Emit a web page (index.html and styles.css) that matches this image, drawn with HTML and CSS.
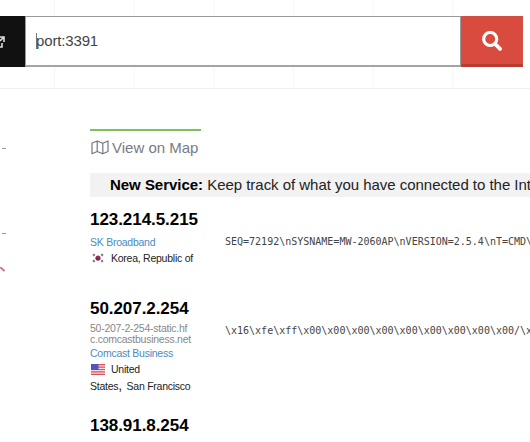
FILE: index.html
```
<!doctype html>
<html>
    <head>
        <title>port:3391 - Search</title>
        <meta charset="utf-8">
        <link rel="stylesheet" href="styles.css">
    </head>
    <body>
        <div id="header">
            <form id="search">
                <div class="explore">
                    <svg width="5" height="14" viewBox="0 0 5 14">
                        <path d="M0 2h4v5M4 2L0 6M0 12h2V8" fill="none" stroke="#ddd" stroke-width="1.6"/>
                    </svg>
                </div>
                <div class="query"><span class="caret"></span>port:3391</div>
                <div class="submit">
                    <svg width="20" height="20" viewBox="0 0 20 20">
                        <circle cx="8.2" cy="8" r="6.5" fill="none" stroke="#fff" stroke-width="3.2"/>
                        <path d="M13.2 13l4.8 4.9" stroke="#fff" stroke-width="3.8" stroke-linecap="round"/>
                    </svg>
                </div>
            </form>
        </div>
        <div id="content">
            <div id="sidebar">
                <div class="dash first"></div>
                <div class="dash second"></div>
                <svg class="map" width="6" height="6" viewBox="0 0 6 6">
                    <path d="M0 0l4.5 4" stroke="#c5788c" stroke-width="2"/>
                </svg>
            </div>
            <div id="results">
                <div class="view">
                    <svg width="18" height="15" viewBox="0 0 18 15">
                        <path d="M1 3l5.2-2 5.6 2.2L17 1v10.5l-5.2 2.3-5.6-2.3L1 13.8zM6.2 1v10.5M11.8 3.2v10.6" fill="none" stroke="#6f7880" stroke-width="1.2" stroke-linejoin="round"/>
                    </svg>
                    <span>View on Map</span>
                </div>
                <div class="notice"><b>New Service:</b> Keep track of what you have connected to the Int</div>
                <div class="result korea">
                    <div class="details">
                        <div class="ip">123.214.5.215</div>
                        <div class="org">SK Broadband</div>
                        <div class="country">
                            <svg class="flag" width="14" height="10" viewBox="0 0 14 10">
                                <circle cx="7" cy="5" r="2.6" fill="#b32450"/>
                                <path d="M4.6 5a2.4 2.4 0 0 0 4.8 0q-1.2 1-2.4 0t-2.4 0" fill="#493968"/>
                                <path d="M2 2.6l1.8-1.4M10.2 1.2l1.8 1.4M2 7.4l1.8 1.4M10.2 8.8l1.8-1.4" stroke="#777" stroke-width="2"/>
                            </svg>
                            <span>Korea, Republic of</span>
                        </div>
                    </div>
                    <pre>SEQ=72192\nSYSNAME=MW-2060AP\nVERSION=2.5.4\nT=CMD\</pre>
                </div>
                <div class="result us">
                    <div class="details">
                        <div class="ip">50.207.2.254</div>
                        <div class="host">50-207-2-254-static.hf<br>c.comcastbusiness.net</div>
                        <div class="org">Comcast Business</div>
                        <div class="country">
                            <svg class="flag" width="14" height="11" viewBox="0 0 14 11">
                                <rect width="14" height="11" fill="#f4dcdf"/>
                                <path d="M0 .7h14M0 3.1h14M0 5.5h14M0 7.9h14M0 10.3h14" stroke="#d9525f" stroke-width="1.2"/>
                                <rect width="7.5" height="6" fill="#5057b8"/>
                            </svg>
                            <span>United</span>
                        </div>
                        <div class="city">States<span class="comma">,</span> San Francisco</div>
                    </div>
                    <pre>\x16\xfe\xff\x00\x00\x00\x00\x00\x00\x00\x00\x00/\x</pre>
                </div>
                <div class="result">
                    <div class="details">
                        <div class="ip">138.91.8.254</div>
                    </div>
                </div>
            </div>
        </div>
    </body>
</html>
```
FILE: styles.css
```
body {
    margin: 0;
    height: 442px;
    overflow: hidden;
    background-color: #FFFFFF;
    font-family: "Liberation Sans", Arial, sans-serif;
    color: #222222;
}
#header {
    box-sizing: border-box;
    height: 89px;
    padding-top: 16px;
    border-bottom: 1px solid #F0F0F0;
    background-image: linear-gradient(to right, #F7F7F7 1px, transparent 1px);
    background-size: 79.7px 100%;
    background-position: 54px 0px;
}
#search {
    display: flex;
    width: 523px;
    height: 51px;
    margin: 0;
}
.explore {
    display: flex;
    align-items: center;
    width: 25px;
    background-color: #111111;
}
.query {
    display: flex;
    flex: 1;
    align-items: center;
    box-sizing: border-box;
    padding: 0px 0px 1px 10px;
    border: 1px solid #999999;
    border-bottom: 2px solid #A5A3A3;
    background-color: #FFFFFF;
    font-size: 15px;
    line-height: 18px;
    letter-spacing: -0.15px;
    color: #444444;
}
.caret {
    width: 1px;
    height: 16px;
    margin-right: -1px;
    background-color: #777777;
}
.submit {
    display: flex;
    align-items: center;
    justify-content: center;
    box-sizing: border-box;
    width: 62px;
    border: 1px solid #CF5145;
    border-bottom: 3px solid #B63C31;
    background-color: #D84B3E;
}
#content {
    display: flex;
}
#sidebar {
    width: 90px;
}
.dash {
    width: 4px;
    height: 1px;
    margin-left: 2px;
    background-color: #999999;
}
.first {
    margin-top: 59px;
}
.second {
    margin-top: 84px;
}
.map {
    display: block;
    margin-top: 33px;
}
#results {
    flex: 1;
    width: 440px;
    padding-top: 40px;
}
.view {
    display: flex;
    align-items: center;
    box-sizing: border-box;
    width: 111px;
    height: 35px;
    padding-left: 1px;
    border-top: 2px solid #7FC15E;
    font-size: 15px;
    white-space: nowrap;
    color: #767D83;
}
.view svg {
    margin-right: 3px;
}
.notice {
    height: 24px;
    margin-top: 9px;
    padding-left: 20px;
    background-color: #F2F2F2;
    font-size: 15px;
    line-height: 24px;
    letter-spacing: -0.03px;
    white-space: nowrap;
}
.notice b {
    color: #000000;
}
.result {
    display: flex;
}
.korea {
    height: 89px;
    margin-top: 13px;
}
.us {
    height: 117px;
}
.details {
    flex-shrink: 0;
    width: 135px;
    font-size: 10.5px;
    letter-spacing: -0.25px;
    white-space: nowrap;
}
.ip {
    height: 19px;
    font-size: 17px;
    font-weight: bold;
    line-height: 19px;
    letter-spacing: -0.06px;
    color: #000000;
}
.host {
    margin-top: 5px;
    line-height: 11px;
    color: #888888;
}
.org {
    margin-top: 7px;
    line-height: 13px;
    color: #4A8BC2;
}
.host + .org {
    margin-top: 2px;
}
.country {
    display: flex;
    align-items: center;
    height: 16px;
    margin-top: 1px;
}
.flag {
    margin: 0px 6px 0px 1px;
}
.city {
    line-height: 16px;
}
.comma {
    margin-right: 2px;
    font-size: 14px;
}
pre {
    margin: 26px 0px 0px;
    font-family: "DejaVu Sans Mono", monospace;
    font-size: 10px;
    line-height: 12px;
    color: #444444;
}
```
